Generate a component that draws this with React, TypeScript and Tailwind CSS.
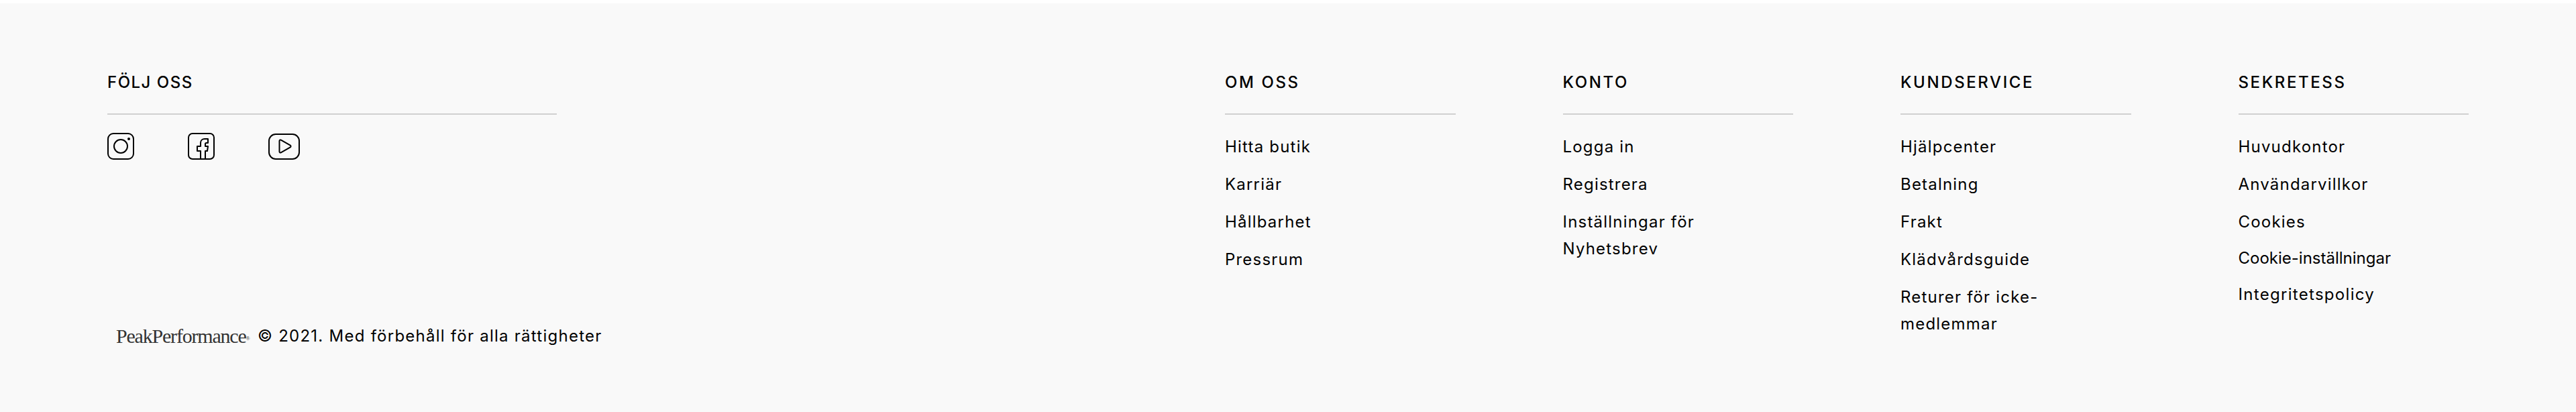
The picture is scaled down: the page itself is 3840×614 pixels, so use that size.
const columns = [
  {
    title: 'OM OSS',
    links: ['Hitta butik', 'Karriär', 'Hållbarhet', 'Pressrum'],
  },
  {
    title: 'KONTO',
    links: ['Logga in', 'Registrera', 'Inställningar för Nyhetsbrev'],
  },
  {
    title: 'KUNDSERVICE',
    links: ['Hjälpcenter', 'Betalning', 'Frakt', 'Klädvårdsguide', 'Returer för icke-medlemmar'],
  },
  {
    title: 'SEKRETESS',
    links: ['Huvudkontor', 'Användarvillkor', 'Cookies'],
  },
];

function InstagramIcon() {
  return (
    <svg width="40" height="40" viewBox="0 0 40 40" fill="none" stroke="#000" strokeWidth="2">
      <rect x="1" y="1" width="38" height="38" rx="8" />
      <circle cx="20" cy="20" r="10" />
      <circle cx="32" cy="9" r="2" fill="#000" stroke="none" />
    </svg>
  );
}

function FacebookIcon() {
  return (
    <svg width="40" height="40" viewBox="0 0 40 40" fill="none" stroke="#000" strokeWidth="2" strokeLinejoin="round">
      <rect x="1" y="1" width="38" height="38" rx="6" />
      <path d="M19 39V27h-5v-7h5v-5c0-3.500 2.500-6 6-6h5v6h-2.500c-.8 0-1.500.7-1.500 1.500V20h4l-1 7h-3v12" />
    </svg>
  );
}

function YoutubeIcon() {
  return (
    <svg width="47" height="39" viewBox="0 0 47 39" fill="none" stroke="#000" strokeWidth="2" strokeLinejoin="round">
      <rect x="1" y="1" width="45" height="37" rx="10" />
      <path d="M16.500 11c0-1.300 1.200-2 2.300-1.300l14 8c1 .6 1 2 0 2.600l-14 8c-1.100.7-2.300 0-2.300-1.300z" />
    </svg>
  );
}

export default function App() {
  return (
    <div className="h-[614px] bg-white pt-[5px] font-['Inter',sans-serif] text-black">
      <footer className="flex h-[609px] justify-between bg-[#f9f9f9] px-40 pt-[102px]">
        <div className="flex w-[670px] flex-col">
          <h3 className="border-b-2 border-[#d0d0d0] pb-[30px] text-[24px] leading-8 font-medium tracking-[1.5px]">FÖLJ OSS</h3>
          <div className="mt-[27px] flex items-center">
            <a className="w-[120px]"><InstagramIcon /></a>
            <a className="w-[120px]"><FacebookIcon /></a>
            <a><YoutubeIcon /></a>
          </div>
          <div className="mt-[247px] flex items-center pl-[13px]">
            <span className="w-[211px] shrink-0 font-['Liberation_Serif',serif] text-[30px] leading-8 tracking-[-1.2px] whitespace-nowrap text-[#333]">
              PeakPerformance<sup className="text-[8px]">®</sup>
            </span>
            <span className="text-[24px] leading-8 tracking-[1.25px] whitespace-nowrap">© 2021. Med förbehåll för alla rättigheter</span>
          </div>
        </div>
        <div className="flex gap-40">
          {columns.map((col) => (
            <div key={col.title} className="w-[343.5px]">
              <h3 className="border-b-2 border-[#d0d0d0] pb-[30px] text-[24px] leading-8 font-medium tracking-[2.6px]">{col.title}</h3>
              <ul className="mt-7 flex w-[260px] flex-col gap-4 text-[24px] leading-10 tracking-[1.2px]">
                {col.links.map((link) => (
                  <li key={link}>{link}</li>
                ))}
                {col.title === 'SEKRETESS' && (
                  <>
                    <li className="-mt-0.5 tracking-normal whitespace-nowrap">Cookie-inställningar</li>
                    <li className="-mt-0.5 tracking-[1.3px]">Integritetspolicy</li>
                  </>
                )}
              </ul>
            </div>
          ))}
        </div>
      </footer>
    </div>
  );
}
